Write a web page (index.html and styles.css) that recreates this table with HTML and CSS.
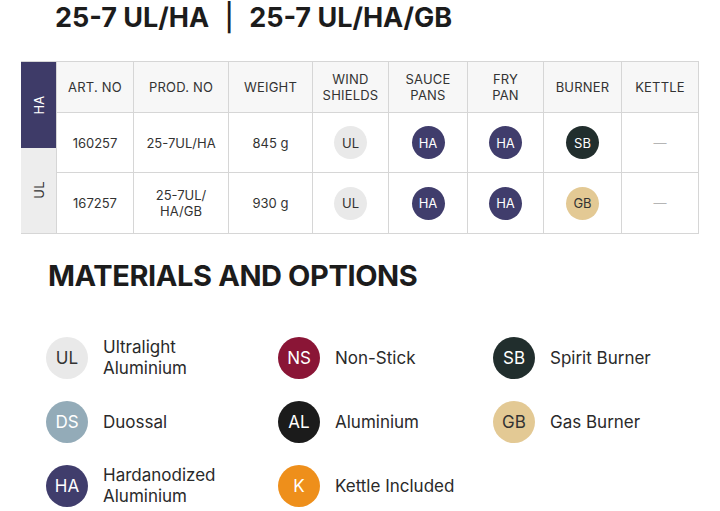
FILE: index.html
```html
<!DOCTYPE html>
<html>
<head>
<meta charset="utf-8">
<link rel="stylesheet" href="styles.css">
</head>
<body>
<h1 class="title">25-7 UL/HA <span class="sep">|</span> 25-7 UL/HA/GB</h1>

<div class="spec">
  <div class="side">
    <div class="side-cell side-ha"><span>HA</span></div>
    <div class="side-cell side-ul"><span>UL</span></div>
  </div>
  <div class="grid">
    <div class="cell head">ART. NO</div>
    <div class="cell head">PROD. NO</div>
    <div class="cell head">WEIGHT</div>
    <div class="cell head">WIND<br>SHIELDS</div>
    <div class="cell head">SAUCE<br>PANS</div>
    <div class="cell head">FRY<br>PAN</div>
    <div class="cell head">BURNER</div>
    <div class="cell head">KETTLE</div>

    <div class="cell">160257</div>
    <div class="cell">25-7UL/HA</div>
    <div class="cell">845 g</div>
    <div class="cell"><span class="dot sm c-ul">UL</span></div>
    <div class="cell"><span class="dot sm c-ha">HA</span></div>
    <div class="cell"><span class="dot sm c-ha">HA</span></div>
    <div class="cell"><span class="dot sm c-sb">SB</span></div>
    <div class="cell dash">—</div>

    <div class="cell">167257</div>
    <div class="cell">25-7UL/<br>HA/GB</div>
    <div class="cell">930 g</div>
    <div class="cell"><span class="dot sm c-ul">UL</span></div>
    <div class="cell"><span class="dot sm c-ha">HA</span></div>
    <div class="cell"><span class="dot sm c-ha">HA</span></div>
    <div class="cell"><span class="dot sm c-gb">GB</span></div>
    <div class="cell dash">—</div>
  </div>
</div>

<h2 class="section">MATERIALS AND OPTIONS</h2>

<div class="legend">
  <div class="item"><span class="dot lg c-ul">UL</span><span class="label">Ultralight<br>Aluminium</span></div>
  <div class="item"><span class="dot lg c-ns">NS</span><span class="label">Non-Stick</span></div>
  <div class="item"><span class="dot lg c-sb">SB</span><span class="label">Spirit Burner</span></div>
  <div class="item"><span class="dot lg c-ds">DS</span><span class="label">Duossal</span></div>
  <div class="item"><span class="dot lg c-al">AL</span><span class="label">Aluminium</span></div>
  <div class="item"><span class="dot lg c-gb">GB</span><span class="label">Gas Burner</span></div>
  <div class="item"><span class="dot lg c-ha">HA</span><span class="label">Hardanodized<br>Aluminium</span></div>
  <div class="item"><span class="dot lg c-k">K</span><span class="label">Kettle Included</span></div>
</div>
</body>
</html>
```

FILE: styles.css
```css
* { box-sizing: border-box; }

body {
  margin: 0;
  background: #ffffff;
  font-family: "Inter", "Liberation Sans", sans-serif;
  color: #2a2a2a;
  width: 720px;
  height: 511px;
  overflow: hidden;
}

.title {
  margin: 0;
  padding: 1px 0 0 55px;
  height: 34px;
  font-size: 27px;
  line-height: 33px;
  font-weight: 700;
  color: #1c1c1c;
  letter-spacing: 0;
}

.title .sep {
  font-weight: 500;
  margin: 0 9px;
}

.spec {
  display: flex;
  margin: 27px 0 0 21px;
  width: 678px;
}

.side {
  display: flex;
  flex-direction: column;
  width: 35px;
  border-top: 1px solid #d6d6d6;
  border-bottom: 1px solid #d6d6d6;
}

.side-cell {
  flex: 1;
  display: flex;
  align-items: center;
  justify-content: center;
}

.side-cell span {
  transform: rotate(-90deg);
  font-size: 13px;
  letter-spacing: 0.3px;
}

.side-ha {
  background: #3e3b68;
  color: #ffffff;
}

.side-ul {
  background: #ededed;
  color: #333333;
}

.grid {
  display: grid;
  grid-template-columns: 77px 95px 84px 76px 79px 76px 78px 77px;
  grid-template-rows: 51px 60px 61px;
  border-top: 1px solid #d6d6d6;
  border-left: 1px solid #d6d6d6;
}

.cell {
  display: flex;
  align-items: center;
  justify-content: center;
  text-align: center;
  border-right: 1px solid #d6d6d6;
  border-bottom: 1px solid #d6d6d6;
  font-size: 13px;
  line-height: 16px;
  color: #333333;
  background: #ffffff;
}

.cell.head {
  background: #f7f7f7;
  letter-spacing: 0.2px;
  line-height: 16px;
  color: #333333;
}

.cell.dash {
  color: #b5b5b5;
}

.dot {
  display: inline-flex;
  align-items: center;
  justify-content: center;
  border-radius: 50%;
  flex: none;
}

.dot.sm {
  width: 33px;
  height: 33px;
  font-size: 13px;
}

.dot.lg {
  width: 42px;
  height: 42px;
  font-size: 17px;
}

.c-ul { background: #e9e9e9; color: #333333; }
.c-ha { background: #403d6c; color: #ffffff; }
.c-sb { background: #212e2d; color: #ffffff; }
.c-gb { background: #e3c994; color: #333333; }
.c-ds { background: #93abb8; color: #ffffff; }
.c-ns { background: #8a1536; color: #ffffff; }
.c-al { background: #1b1b1b; color: #ffffff; }
.c-k  { background: #ee8f1b; color: #ffffff; }

.section {
  margin: 24px 0 0 0;
  padding-left: 48px;
  height: 36px;
  font-size: 29px;
  line-height: 36px;
  font-weight: 700;
  color: #1c1c1c;
  letter-spacing: -0.4px;
}

.legend {
  display: grid;
  grid-template-columns: 232px 215px 1fr;
  grid-auto-rows: 42px;
  row-gap: 22px;
  margin-top: 43px;
  padding-left: 46px;
}

.item {
  display: flex;
  align-items: center;
  gap: 15px;
}

.label {
  font-size: 17px;
  line-height: 21px;
  color: #2a2a2a;
}
```
